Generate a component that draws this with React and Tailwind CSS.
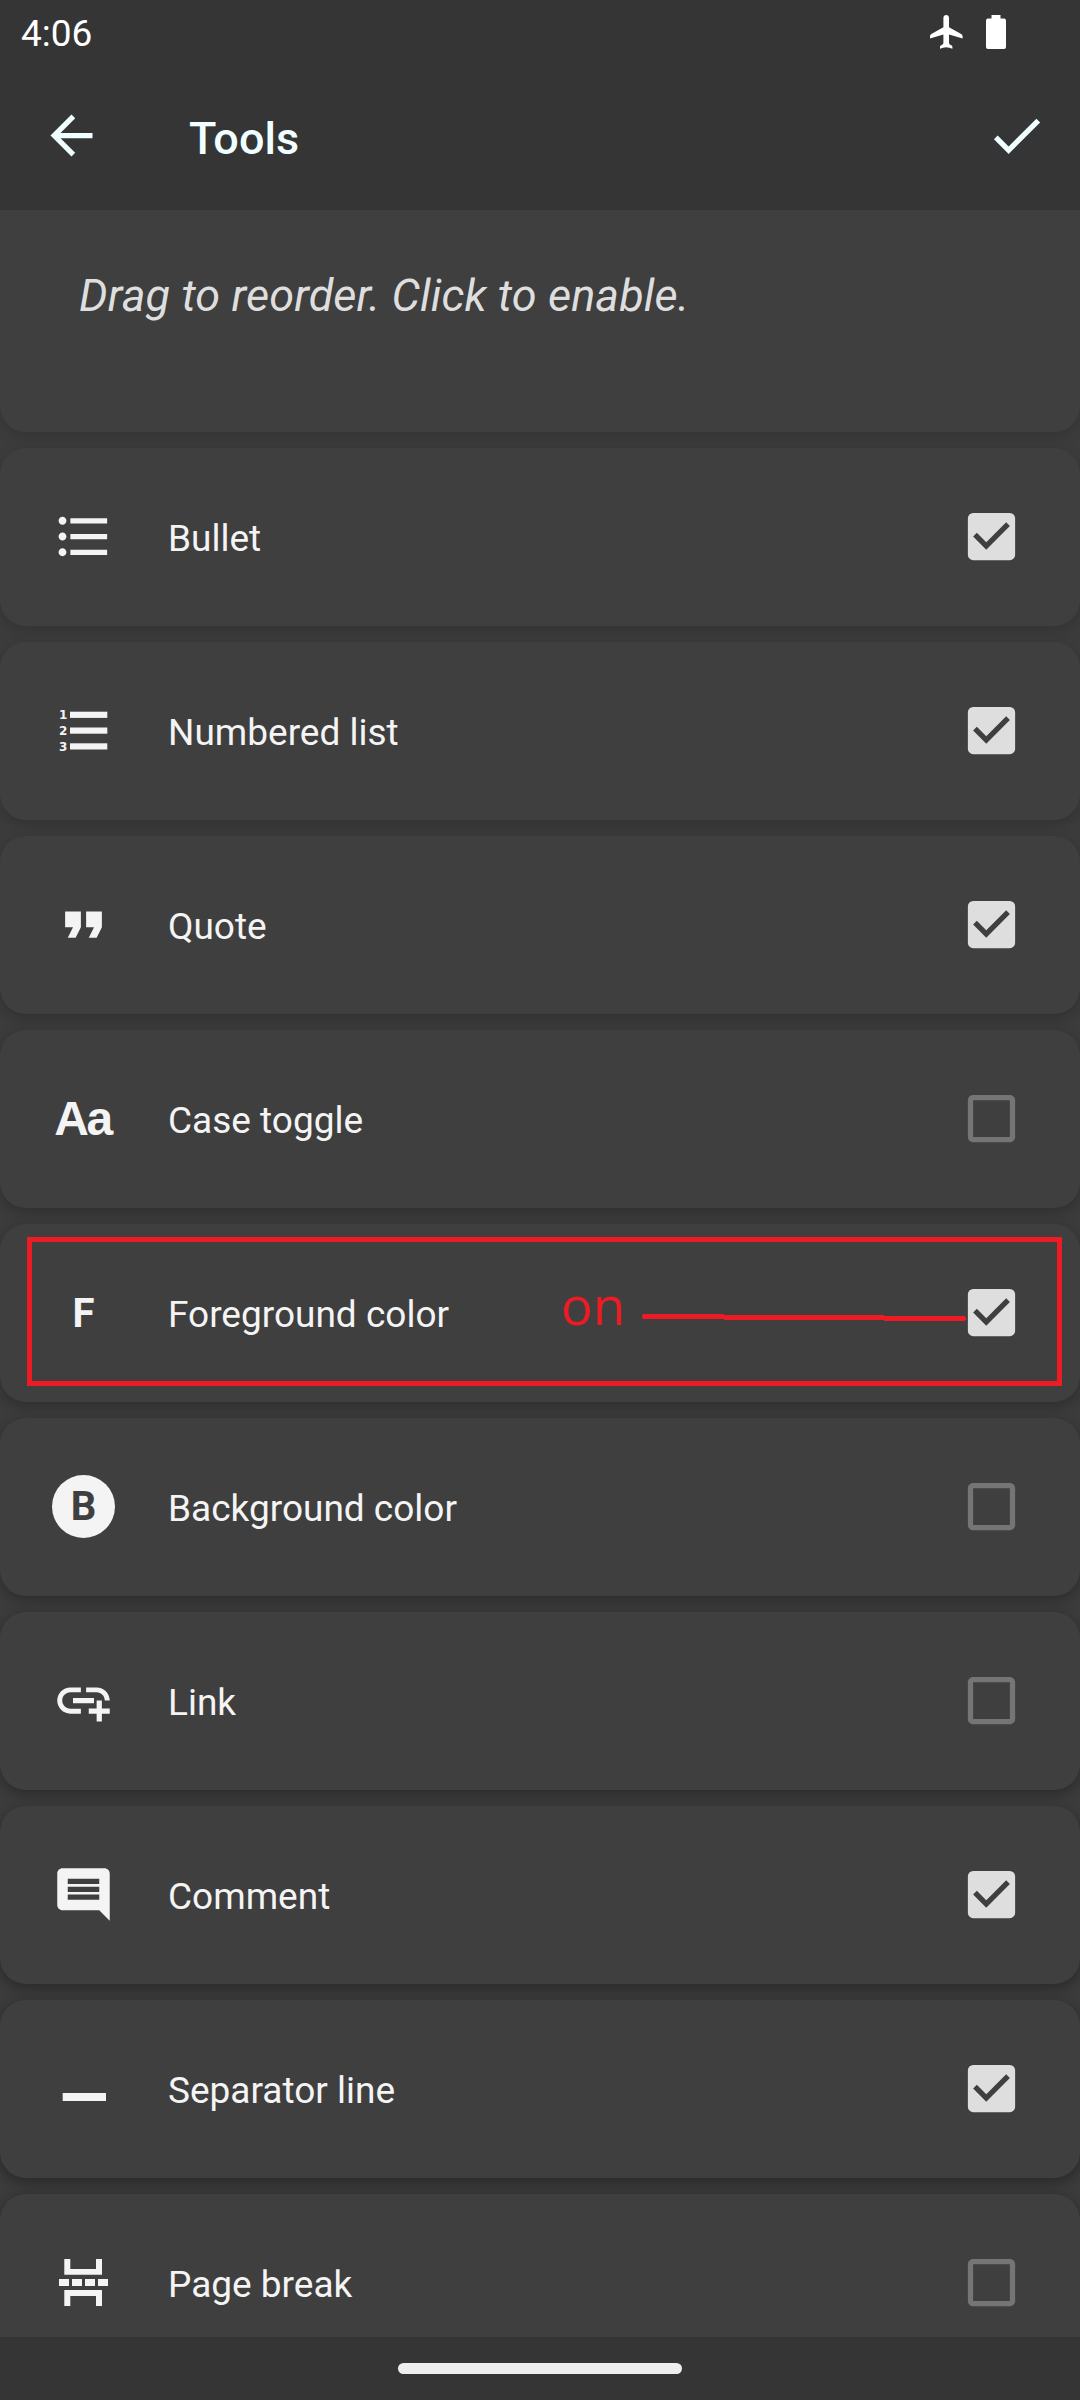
import { MdArrowBack, MdCheck, MdFormatListBulleted, MdFormatQuote, MdAddLink, MdComment, MdCheckBox, MdCheckBoxOutlineBlank } from "react-icons/md";

function PlaneIcon() {
  return (
    <svg className="mb-[3px] ml-auto" width="33" height="34" viewBox="0 0 33 34" fill="currentColor">
      <path d="M16.200 0c1.700 0 2.800 1.200 2.800 3v9.300l12.200 6.700q1.400.8 1.400 2.200v2.300L19 19.400v8.900q.5 1.200 2.600 2.300.8.500.8 1.400v1.700q-3-1.500-6.200-1.500t-6.200 1.500V32q0-.9.800-1.400 2.100-1.100 2.600-2.300v-8.900L0 23.500v-2.300Q0 19.800 1.300 19l12.100-6.700V3c0-1.800 1.100-3 2.800-3z" />
    </svg>
  );
}

function NumberedIcon() {
  return (
    <svg width="63" height="63" viewBox="0 0 63 63" fill="currentColor">
      <rect x="18" y="12.700" width="37.300" height="6.200" />
      <rect x="18" y="28.500" width="37.300" height="6.200" />
      <rect x="18" y="44.300" width="37.300" height="6.200" />
      <g fontFamily="DejaVu Sans" fontWeight="700" fontSize="12">
        <text x="7" y="20.300">1</text>
        <text x="7" y="35.500">2</text>
        <text x="7" y="51.700">3</text>
      </g>
    </svg>
  );
}

function SeparatorIcon() {
  return (
    <svg width="63" height="63" viewBox="0 0 63 63" fill="currentColor">
      <rect x="10.700" y="36" width="43.300" height="8" />
    </svg>
  );
}

function PageBreakIcon() {
  return (
    <svg width="63" height="63" viewBox="0 0 63 63" fill="currentColor">
      <path d="M12.300 8h6v10h25.700V8h6v15.700H12.300z" />
      <path d="M12.300 55V39H50v16h-6V45H18.300v10z" />
      <path d="M7 28h10v7H7zM20 28h10v7H20zM33 28h10v7H33zM46 28h10v7H46z" />
    </svg>
  );
}

const tools = [
  { label: "Bullet", on: true, icon: <MdFormatListBulleted size={63} /> },
  { label: "Numbered list", on: true, icon: <NumberedIcon /> },
  { label: "Quote", on: true, icon: <MdFormatQuote size={63} /> },
  { label: "Case toggle", on: false, icon: <span className="mr-[2px] pt-px font-['Liberation_Sans'] text-[48px] leading-[62px] font-bold tracking-[-2.5px]">Aa</span> },
  { label: "Foreground color", on: true, marked: true, icon: <span className="pt-[2px] text-[40px] leading-[63px] font-bold">F</span> },
  { label: "Background color", on: false, icon: <span className="flex size-[63px] items-center justify-center rounded-full bg-[#f4f4f4] pt-px text-[40px] font-bold text-[#3f3f3f]">B</span> },
  { label: "Link", on: false, icon: <MdAddLink size={63} /> },
  { label: "Comment", on: true, icon: <MdComment size={63} /> },
  { label: "Separator line", on: true, icon: <SeparatorIcon /> },
  { label: "Page break", on: false, icon: <PageBreakIcon /> },
];

function Annotation() {
  return (
    <div className="absolute top-[13px] left-[27px] h-[149px] w-[1035px] border-5 border-[#ed1c24] text-[#ed1c24]">
      <span className="absolute top-[23px] left-[529px] font-['Open_Sans'] text-[53px] leading-[80px]">on</span>
      <svg className="absolute top-[72px] left-[610px]" width="326" height="10" viewBox="0 0 326 10" fill="currentColor">
        <path d="M1 0h81v1h160v1h81v1h1v3h-1v1h-81v-1H82v-1H1v-1H0V1h1z" />
      </svg>
    </div>
  );
}

function ToolRow({ tool, index }) {
  // Elevation shadows deepen towards the bottom of the screen.
  const boxShadow = `0 4px 14px rgba(0,0,0,${0.16 + 0.025 * index})`;
  return (
    <li className="relative flex h-[178px] shrink-0 items-center rounded-[26px] bg-[#3f3f3f] pr-[57px] pl-[52px]" style={{ boxShadow }}>
      <span className="mb-px flex size-[63px] items-center justify-center text-[#f4f4f4]">{tool.icon}</span>
      <span className="ml-[53px] flex-1 pt-[3px] text-[37px] leading-[50px] text-[#f4f4f4]">{tool.label}</span>
      <span className="mb-px flex size-[63px] items-center justify-center">
        {tool.on ? <MdCheckBox size={63} className="text-[#dedede]" /> : <MdCheckBoxOutlineBlank size={63} className="text-[#757575]" />}
      </span>
      {tool.marked && <Annotation />}
    </li>
  );
}

export default function App() {
  return (
    <div className="flex h-[2400px] w-[1080px] flex-col overflow-hidden bg-[#3c3c3c] font-[Roboto,sans-serif]">
      <header className="z-10 h-[210px] shrink-0 bg-[#353535]">
        <div className="flex h-[66px] items-center pl-[21px] text-white">
          <span className="pt-px text-[37px] leading-[44px]">4:06</span>
          <PlaneIcon />
          <svg className="mr-[74px] mb-[3px] ml-[23px]" width="20" height="34" viewBox="0 0 20 34" fill="currentColor">
            <path d="M5.500 0h9v3.500H18a2 2 0 0 1 2 2V32a2 2 0 0 1-2 2H2a2 2 0 0 1-2-2V5.500a2 2 0 0 1 2-2h3.500z" />
          </svg>
        </div>
        <div className="flex h-[140px] items-center pr-[32px] pl-[40px] text-[#f0ffff]">
          <MdArrowBack size={63} className="mb-px" />
          <h1 className="ml-[86px] flex-1 pt-[5px] text-[45px] leading-[56px] font-medium">Tools</h1>
          <MdCheck size={63} className="mb-px" />
        </div>
      </header>
      <main className="flex min-h-0 flex-1 flex-col overflow-hidden">
        <div className="h-[222px] shrink-0 rounded-b-[26px] bg-[#3f3f3f] pt-[57px] pl-[79px] shadow-[0_4px_14px_rgba(0,0,0,0.14)]">
          <p className="text-[45px] leading-[58px] tracking-[0.1px] text-[#dedede] italic">Drag to reorder. Click to enable.</p>
        </div>
        <ul className="mt-4 flex flex-col gap-4">
          {tools.map((t, i) => <ToolRow key={t.label} tool={t} index={i} />)}
        </ul>
      </main>
      <footer className="z-10 flex h-[63px] shrink-0 items-center justify-center bg-[#353535]">
        <div className="h-[11px] w-[284px] rounded-full bg-[#eeeeee]" />
      </footer>
    </div>
  );
}
